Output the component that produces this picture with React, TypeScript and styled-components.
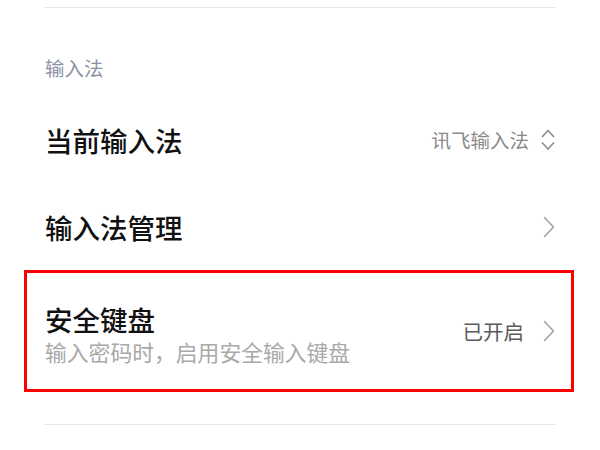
import React from "react";
import styled, { createGlobalStyle } from "styled-components";

const Global = createGlobalStyle`
  html, body { margin: 0; padding: 0; background: #ffffff; }
  body { font-family: "Noto Sans CJK SC", "Noto Sans", sans-serif; }
`;

const Page = styled.div`
  width: 600px;
  height: 450px;
  box-sizing: border-box;
  padding: 7px 45px 0 45px;
  background: #ffffff;
  overflow: hidden;
`;

const Divider = styled.div<{ $top?: number }>`
  height: 1px;
  margin: ${(p) => p.$top ?? 0}px -1px 0 -1px;
  background: #e6e6e8;
`;

const SectionHeader = styled.div`
  height: 88px;
  box-sizing: border-box;
  padding-top: 50px;
  font-size: 19.5px;
  line-height: 20px;
  color: #8d90a6;
`;

const Row = styled.div<{ $h: number }>`
  height: ${(p) => p.$h}px;
  display: flex;
  align-items: center;
  justify-content: space-between;
`;

const Title = styled.div`
  font-size: 27.5px;
  line-height: 34px;
  font-weight: 500;
  color: #111111;
`;

const Subtitle = styled.div`
  margin-top: 2px;
  font-size: 21.8px;
  line-height: 28px;
  color: #a9a9a9;
`;

const Right = styled.div`
  display: flex;
  align-items: center;
`;

const Value = styled.span<{ $dark?: boolean; $gap: number }>`
  font-size: ${(p) => (p.$dark ? 20.5 : 19.5)}px;
  line-height: 28px;
  color: ${(p) => (p.$dark ? "#5a5a5a" : "#8a8a8a")};
  margin-right: ${(p) => p.$gap}px;
`;

const Highlight = styled.div`
  margin: 0 -19px 0 -21px;
  border: 3px solid #ff0000;
  height: 122px;
  box-sizing: border-box;
  padding: 0 16px 0 18px;
  display: flex;
  align-items: center;
  justify-content: space-between;
`;

const TextBlock = styled.div`
  display: flex;
  flex-direction: column;
  margin-top: 5px;
`;

const Chevron = () => (
  <svg width="12" height="22" viewBox="0 0 12 22" fill="none">
    <path d="M1.5 1.5 L10.5 11 L1.5 20.5" stroke="#a3a3a3" strokeWidth="1.6" strokeLinecap="round" strokeLinejoin="round" />
  </svg>
);

const UpDown = () => (
  <svg width="14" height="24" viewBox="0 0 14 24" fill="none">
    <path d="M1.5 8.5 L7 2.5 L12.5 8.5" stroke="#8f8f8f" strokeWidth="1.7" strokeLinecap="round" strokeLinejoin="round" />
    <path d="M1.5 15 L7 21 L12.5 15" stroke="#8f8f8f" strokeWidth="1.7" strokeLinecap="round" strokeLinejoin="round" />
  </svg>
);

export default function App() {
  return (
    <>
      <Global />
      <Page>
        <Divider />
        <SectionHeader>输入法</SectionHeader>
        <Row $h={88}>
          <Title>当前输入法</Title>
          <Right>
            <Value $gap={12}>讯飞输入法</Value>
            <UpDown />
          </Right>
        </Row>
        <Row $h={86}>
          <Title>输入法管理</Title>
          <Right>
            <Chevron />
          </Right>
        </Row>
        <Highlight>
          <TextBlock>
            <Title>安全键盘</Title>
            <Subtitle>输入密码时，启用安全输入键盘</Subtitle>
          </TextBlock>
          <Right>
            <Value $dark $gap={19}>已开启</Value>
            <Chevron />
          </Right>
        </Highlight>
        <Divider $top={32} />
      </Page>
    </>
  );
}
